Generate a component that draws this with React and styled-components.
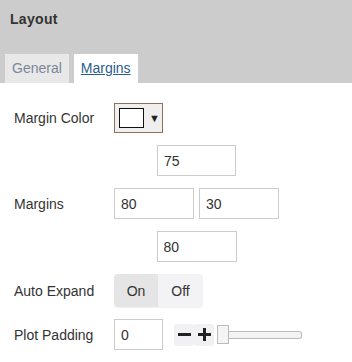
import React, { useState } from 'react';
import styled, { createGlobalStyle } from 'styled-components';

const GlobalStyle = createGlobalStyle`
  body {
    margin: 0;
    background: #fff;
    font-family: 'Liberation Sans', Arial, sans-serif;
    font-size: 14px;
    color: #333;
  }
`;

const Panel = styled.div`
  width: 352px;
  height: 362px;
  background: #fff;
  overflow: hidden;
`;

const Header = styled.div`
  background: #ccc;
  height: 83px;
  box-sizing: border-box;
  padding-top: 11px;
  display: flex;
  flex-direction: column;
`;

const Title = styled.div`
  font-weight: bold;
  font-size: 14px;
  line-height: 16px;
  color: #333;
  padding-left: 10px;
  letter-spacing: 0.3px;
`;

const Tabs = styled.div`
  display: flex;
  gap: 5px;
  margin-top: auto;
  padding-left: 5px;
`;

const Tab = styled.div`
  padding: 6px 7px 7px;
  line-height: 16px;
  font-size: 14px;
  background: ${p => (p.$active ? '#fff' : '#e8e8e8')};
  color: ${p => (p.$active ? '#2a5d8f' : '#7a8798')};
  text-decoration: ${p => (p.$active ? 'underline' : 'none')};
  cursor: pointer;
`;

const Body = styled.div`
  padding: 20px 0 0 14px;
  display: flex;
  flex-direction: column;
  gap: 12px;
`;

const Row = styled.div`
  display: flex;
  align-items: center;
`;

/* single input centred under the two margin inputs */
const CenterRow = styled.div`
  display: flex;
  justify-content: center;
  width: 165px;
  margin-left: 100px;
`;

const Label = styled.div`
  width: 100px;
  flex: none;
  line-height: 16px;
  color: #333;
`;

const ColorButton = styled.div`
  width: 49px;
  height: 30px;
  box-sizing: border-box;
  border: 1px solid #8c7359;
  background: #efefef;
  display: flex;
  align-items: center;
  padding-left: 4px;
  gap: 5px;
`;

const Swatch = styled.div`
  width: 25px;
  height: 20px;
  box-sizing: border-box;
  border: 1px solid #111;
  background: ${p => p.$color};
`;

const Arrow = styled.span`
  font-size: 11px;
  color: #222;
  line-height: 1;
`;

const Input = styled.input`
  width: ${p => p.$w || 80}px;
  height: 31px;
  box-sizing: border-box;
  border: 1px solid #ccc;
  padding: 0 6px;
  margin-left: ${p => p.$gap || 0}px;
  font-family: 'Liberation Sans', Arial, sans-serif;
  font-size: 14px;
  color: #333;
  outline: none;
`;

const Toggle = styled.div`
  display: flex;
  border-radius: 4px;
  overflow: hidden;
  box-shadow: 0 1px 1px rgba(0, 0, 0, 0.06);
`;

const ToggleButton = styled.div`
  width: ${p => p.$w}px;
  height: 33px;
  display: flex;
  align-items: center;
  justify-content: center;
  background: ${p => (p.$on ? '#e5e5e5' : '#f3f3f6')};
  color: #333;
  cursor: pointer;
`;

const StepGroup = styled.div`
  display: flex;
  margin-left: 11px;
`;

const StepButton = styled.div`
  width: 20px;
  height: 22px;
  display: flex;
  align-items: center;
  justify-content: center;
  background: #f1f1f4;
  border-radius: 3px;
`;

const Slider = styled.div`
  display: flex;
  align-items: center;
  margin-left: 3px;
`;

const Thumb = styled.div`
  width: 12px;
  height: 19px;
  box-sizing: border-box;
  border: 1px solid #bbb;
  background: #f4f4f4;
`;

const Track = styled.div`
  width: 73px;
  height: 8px;
  box-sizing: border-box;
  border: 1px solid #bbb;
  border-left: none;
  border-radius: 0 3px 3px 0;
  background: #f3f3f3;
`;

const Minus = () => (
  <svg width="15" height="15" viewBox="0 0 15 15">
    <rect x="1" y="6" width="13" height="3" fill="#222" />
  </svg>
);

const Plus = () => (
  <svg width="15" height="15" viewBox="0 0 15 15">
    <rect x="1" y="6" width="13" height="3" fill="#222" />
    <rect x="6" y="1" width="3" height="13" fill="#222" />
  </svg>
);

export default function App() {
  const [expand, setExpand] = useState(true);
  const [tab, setTab] = useState('Margins');
  return (
    <Panel>
      <GlobalStyle />
      <Header>
        <Title>Layout</Title>
        <Tabs>
          {['General', 'Margins'].map(t => (
            <Tab key={t} $active={tab === t} onClick={() => setTab(t)}>
              {t}
            </Tab>
          ))}
        </Tabs>
      </Header>
      <Body>
        <Row>
          <Label>Margin Color</Label>
          <ColorButton>
            <Swatch $color="#fff" />
            <Arrow>▼</Arrow>
          </ColorButton>
        </Row>
        <CenterRow>
          <Input defaultValue="75" $w={79} />
        </CenterRow>
        <Row>
          <Label>Margins</Label>
          <Input defaultValue="80" />
          <Input defaultValue="30" $gap={5} />
        </Row>
        <CenterRow>
          <Input defaultValue="80" />
        </CenterRow>
        <Row>
          <Label>Auto Expand</Label>
          <Toggle>
            <ToggleButton $w={44} $on={expand} onClick={() => setExpand(true)}>On</ToggleButton>
            <ToggleButton $w={45} $on={!expand} onClick={() => setExpand(false)}>Off</ToggleButton>
          </Toggle>
        </Row>
        <Row>
          <Label>Plot Padding</Label>
          <Input defaultValue="0" $w={49} />
          <StepGroup>
            <StepButton><Minus /></StepButton>
            <StepButton><Plus /></StepButton>
          </StepGroup>
          <Slider>
            <Thumb />
            <Track />
          </Slider>
        </Row>
      </Body>
    </Panel>
  );
}
